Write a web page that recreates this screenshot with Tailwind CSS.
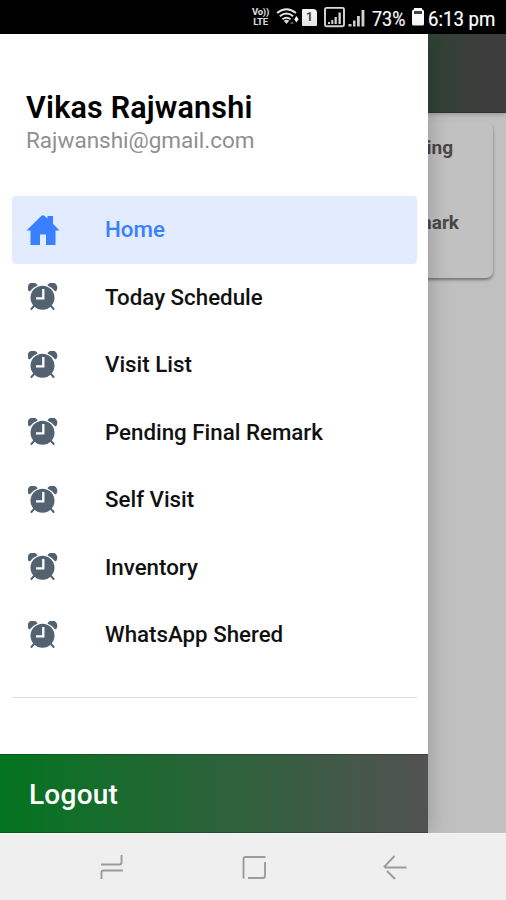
<!DOCTYPE html>
<html lang="en">
<head>
<meta charset="utf-8">
<title>Menu</title>
<script src="https://cdn.jsdelivr.net/npm/@tailwindcss/browser@4"></script>
</head>
<body class="w-[506px] h-[900px] overflow-hidden flex flex-col bg-[#efefef] font-['Roboto','Liberation_Sans',sans-serif]">
<svg class="hidden">
  <symbol id="clock" viewBox="0 0 30 28">
    <g fill="#526270">
      <path d="M1.500 7.300A4 4 0 0 1 8.300 2.200Q4 4 1.500 7.300Z" stroke="#526270" stroke-width="2" stroke-linejoin="round"/>
      <path d="M27.500 7.300A4 4 0 0 0 20.700 2.200Q25 4 27.500 7.300Z" stroke="#526270" stroke-width="2" stroke-linejoin="round"/>
      <circle cx="14.500" cy="14.700" r="12"/>
      <path d="M6.500 22.500L3.400 26M22.500 22.500L25.600 26" stroke="#526270" stroke-width="1.900" stroke-linecap="round"/>
    </g>
    <path d="M15.300 6V15.300H8" fill="none" stroke="#fff" stroke-width="2.300"/>
  </symbol>
</svg>

<header class="h-[34px] shrink-0 bg-black flex items-center text-white">
  <div class="ml-[251px] w-[19px] flex flex-col items-center text-[9.500px] leading-[10px] font-bold text-[#e4e4e4] tracking-[-0.2px]"><span class="h-[10px]">Vo))</span><span class="h-[10px]">LTE</span></div>
  <svg class="ml-[6px] w-[24px] h-[20px]" viewBox="0 0 24 20" fill="none" stroke="#e4e4e4" stroke-width="1.900">
    <path d="M1 6Q10.500-1.500 20 6M3.800 9.200Q10.500 3.800 17.200 9.200M6.500 12.300Q10.500 9 14.500 12.300"/>
    <path d="M7.800 13.800Q10.500 11.800 13.200 13.800L10.500 17Z" fill="#e4e4e4" stroke="none"/>
    <path d="M18.200 12.200L20.400 9L22.600 12.200ZM18.200 12.200L20.400 15.500L22.600 12.200Z" fill="#fff" stroke="none"/>
    <path d="M14 17L16 14L18 17Z" fill="#555" stroke="none"/>
  </svg>
  <div class="ml-[2px] w-[15px] h-[17px] bg-[#f2f2f2] rounded-[1px] rounded-tr-[4px] text-[#444] text-[12px] leading-[17px] font-bold text-center">1</div>
  <svg class="ml-[7px] w-[43px] h-[22px]" viewBox="0 0 43 22">
    <rect x="1" y="1.900" width="19" height="18.400" rx="1.500" fill="none" stroke="#ddd" stroke-width="1.900"/>
    <path d="M4 16h2v2H4zM7.300 14h2v4h-2zM10.600 11h2.200v7h-2.200zM14.500 6.500h2.300V18h-2.300z" fill="#ddd"/>
    <path d="M24.500 18h3v2.500h-3zM29 14.500h2.500v6H29zM33 10h2.800v10.500H33zM37.500 4h2.900v16.500h-2.900z" fill="#d4d4d4"/>
  </svg>
  <span class="ml-[5px] w-[34px] text-[20px] leading-[34px] whitespace-nowrap mt-[3px] origin-left scale-x-[0.900] [-webkit-text-stroke:0.200px_white]">73%</span>
  <svg class="ml-[5px] w-[14px] h-[20px]" viewBox="0 0 14 20"><path d="M3 2.500V1H11V2.500Q13 2.500 13 4.500V17Q13 18.500 11.500 18.500H2.500Q1 18.500 1 17V4.500Q1 2.500 3 2.500Z" fill="#fff"/><path d="M3 4H11V7H3Z" fill="#444"/></svg>
  <span class="ml-[3px] text-[20px] leading-[34px] whitespace-nowrap mt-[3px] origin-left scale-x-[0.930] [-webkit-text-stroke:0.200px_white]">6:13 pm</span>
</header>

<div class="h-[799px] shrink-0 flex bg-[#c0c0c0]">
  <aside class="relative z-10 w-[428px] shrink-0 bg-white flex flex-col shadow-[0_0_22px_rgba(0,0,0,0.24)]">
    <div class="pl-[26px] pt-[56px] h-[162px]">
      <h1 class="text-[30.500px] leading-[36px] font-semibold tracking-[0.200px] text-black whitespace-nowrap">Vikas Rajwanshi</h1>
      <p class="text-[22.500px] leading-[28px] text-[#8f8f8f] whitespace-nowrap">Rajwanshi@gmail.com</p>
    </div>
    <nav class="mx-[12px] w-[405px] flex flex-col text-[22.300px] font-medium text-[#111]">
      <a class="h-[67.500px] flex items-center rounded-[4px] bg-[#e2ebff] text-[#3880ff]">
        <svg class="ml-[14px] w-[34px] h-[32px] shrink-0" viewBox="0 0 34 32"><path d="M.5 16.500L15.500 1.800Q17 .5 18.500 1.800L21.500 4.600V2H27V9.800L33.500 16.500H29.500V31H20V20.500H14V31H4.500V16.500Z" fill="#3880ff"/></svg>
        <span class="ml-[45px]">Home</span>
      </a>
      <a class="h-[67.500px] flex items-center"><svg class="ml-[16px] w-[30px] h-[28px]"><use href="#clock"/></svg><span class="ml-[47px]">Today Schedule</span></a>
      <a class="h-[67.500px] flex items-center"><svg class="ml-[16px] w-[30px] h-[28px]"><use href="#clock"/></svg><span class="ml-[47px]">Visit List</span></a>
      <a class="h-[67.500px] flex items-center"><svg class="ml-[16px] w-[30px] h-[28px]"><use href="#clock"/></svg><span class="ml-[47px]">Pending Final Remark</span></a>
      <a class="h-[67.500px] flex items-center"><svg class="ml-[16px] w-[30px] h-[28px]"><use href="#clock"/></svg><span class="ml-[47px]">Self Visit</span></a>
      <a class="h-[67.500px] flex items-center"><svg class="ml-[16px] w-[30px] h-[28px]"><use href="#clock"/></svg><span class="ml-[47px]">Inventory</span></a>
      <a class="h-[67.500px] flex items-center"><svg class="ml-[16px] w-[30px] h-[28px]"><use href="#clock"/></svg><span class="ml-[47px]">WhatsApp Shered</span></a>
      <div class="mt-[28px] h-[1.500px] bg-[#dcdde0]"></div>
    </nav>
    <div class="mt-auto h-[79px] pl-[29px] pt-[2px] flex items-center bg-[linear-gradient(90deg,#047420,#525252)] border-y border-black/20 text-white text-[28px] font-medium tracking-[0.250px]">Logout</div>
  </aside>
  <main class="flex-1 overflow-hidden flex flex-col">
    <div class="h-[79px] shrink-0 bg-[linear-gradient(90deg,#304336,#3d3d3d_75%)] border-b border-[#333] shadow-[0_1px_5px_rgba(0,0,0,0.25)]"></div>
    <div class="mt-[9px] -ml-[20px] mr-[13px] h-[156px] rounded-[7px] bg-[#c1c1c1] shadow-[0_2px_3px_rgba(0,0,0,0.4)] text-[19px] font-bold text-[#484848] flex flex-col">
      <span class="mt-[14px] w-[45px] h-[24px] leading-[24px] flex justify-end self-start whitespace-nowrap">Pending</span>
      <span class="mt-[51px] w-[51px] h-[24px] leading-[24px] flex justify-end self-start whitespace-nowrap">Remark</span>
    </div>
  </main>
</div>

<footer class="relative z-20 flex-1 bg-[#efefef] flex items-center justify-between pl-[99px] pr-[98px] border-t border-[#f5f5f5]">
  <svg class="w-[26px] h-[28px]" viewBox="0 0 26 28" fill="none" stroke="#9c9c9c" stroke-width="1.900"><path d="M2 11.500H20.500Q22.500 11.500 22.500 9.500V2M24 17.500H4.500Q2.500 17.500 2.500 19.500V26"/></svg>
  <svg class="w-[26px] h-[28px]" viewBox="0 0 26 28" fill="none" stroke="#9c9c9c" stroke-width="1.900"><path d="M2.500 25.500V6Q2.500 4 4.500 4H24.500M24 9V23Q24 25 22 25H7"/></svg>
  <svg class="w-[26px] h-[28px]" viewBox="0 0 26 28" fill="none" stroke="#9c9c9c" stroke-width="1.900"><path d="M12.500 3L2.500 13.500L3.500 14.500H24.500M5 18L13 26"/></svg>
</footer>
</body>
</html>
